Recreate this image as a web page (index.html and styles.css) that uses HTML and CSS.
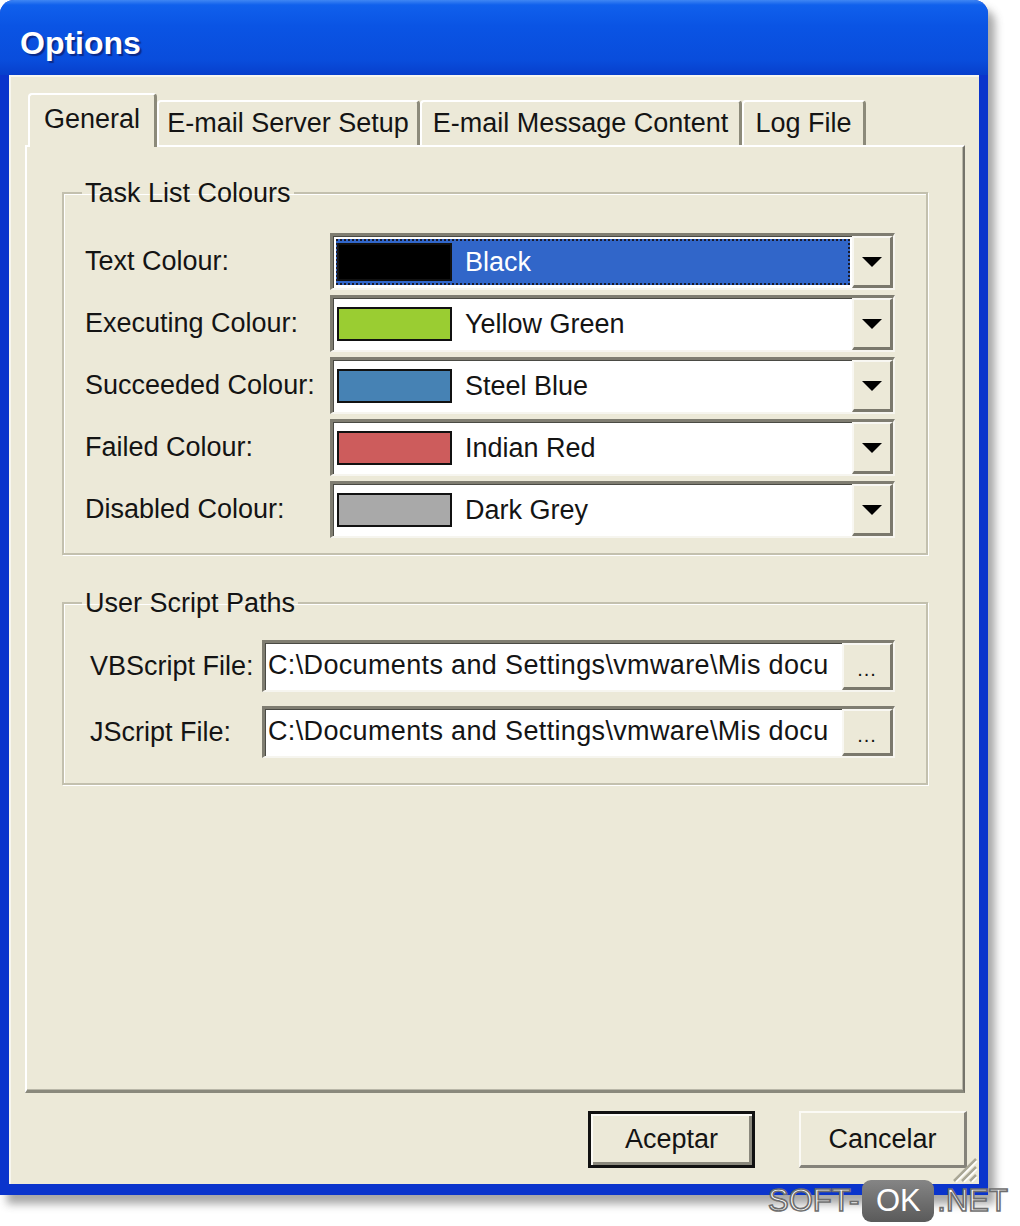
FILE: index.html
```html
<!DOCTYPE html>
<html>
<head>
<meta charset="utf-8">
<title>Options</title>
<link rel="stylesheet" href="styles.css">
</head>
<body>
<div class="window">
  <div class="titlebar"><span class="title">Options</span></div>
  <div class="client">
    <div class="tabs">
      <div class="tab active t-general">General</div>
      <div class="tab t-server">E-mail Server Setup</div>
      <div class="tab t-message">E-mail Message Content</div>
      <div class="tab t-log">Log File</div>
    </div>
    <div class="panel">
      <fieldset class="group">
        <legend>Task List Colours</legend>
        <div class="rows colours">
          <div class="row">
            <span class="label">Text Colour:</span>
            <div class="combo">
              <div class="value">
                <div class="sel focused"><span class="swatch sw-black"></span><span class="name">Black</span></div>
              </div>
              <div class="drop"><svg width="20" height="10" viewBox="0 0 20 10"><path d="M0 0H20L10 10Z" fill="#000"/></svg></div>
            </div>
          </div>
          <div class="row">
            <span class="label">Executing Colour:</span>
            <div class="combo">
              <div class="value">
                <div class="sel"><span class="swatch sw-yg"></span><span class="name">Yellow Green</span></div>
              </div>
              <div class="drop"><svg width="20" height="10" viewBox="0 0 20 10"><path d="M0 0H20L10 10Z" fill="#000"/></svg></div>
            </div>
          </div>
          <div class="row">
            <span class="label">Succeeded Colour:</span>
            <div class="combo">
              <div class="value">
                <div class="sel"><span class="swatch sw-sb"></span><span class="name">Steel Blue</span></div>
              </div>
              <div class="drop"><svg width="20" height="10" viewBox="0 0 20 10"><path d="M0 0H20L10 10Z" fill="#000"/></svg></div>
            </div>
          </div>
          <div class="row">
            <span class="label">Failed Colour:</span>
            <div class="combo">
              <div class="value">
                <div class="sel"><span class="swatch sw-ir"></span><span class="name">Indian Red</span></div>
              </div>
              <div class="drop"><svg width="20" height="10" viewBox="0 0 20 10"><path d="M0 0H20L10 10Z" fill="#000"/></svg></div>
            </div>
          </div>
          <div class="row">
            <span class="label">Disabled Colour:</span>
            <div class="combo">
              <div class="value">
                <div class="sel"><span class="swatch sw-dg"></span><span class="name">Dark Grey</span></div>
              </div>
              <div class="drop"><svg width="20" height="10" viewBox="0 0 20 10"><path d="M0 0H20L10 10Z" fill="#000"/></svg></div>
            </div>
          </div>
        </div>
      </fieldset>

      <fieldset class="group paths-group">
        <legend>User Script Paths</legend>
        <div class="rows paths">
          <div class="row prow">
            <span class="label plabel">VBScript File:</span>
            <div class="field">
              <span class="path">C:\Documents and Settings\vmware\Mis docu</span>
              <span class="browse">...</span>
            </div>
          </div>
          <div class="row prow">
            <span class="label plabel">JScript File:</span>
            <div class="field">
              <span class="path">C:\Documents and Settings\vmware\Mis docu</span>
              <span class="browse">...</span>
            </div>
          </div>
        </div>
      </fieldset>
    </div>
    <div class="buttons">
      <div class="btn default">Aceptar</div>
      <div class="btn">Cancelar</div>
    </div>
    <svg class="grip" width="30" height="30" viewBox="0 0 30 30">
      <path d="M28 6L6 28M28 14L14 28M28 22L22 28" stroke="#a9a796" stroke-width="2.5"/>
      <path d="M29 8L8 29M29 16L16 29M29 24L24 29" stroke="#ffffff" stroke-width="1.5"/>
    </svg>
  </div>
</div>
<div class="watermark">
  <span class="wm-t">SOFT-</span><span class="wm-ok">OK</span><span class="wm-t">.NET</span>
</div>
</body>
</html>
```

FILE: styles.css
```css
* { box-sizing: border-box; }
html, body { margin: 0; padding: 0; }
body {
  width: 1020px;
  height: 1226px;
  background: #ffffff;
  font-family: "Liberation Sans", Arial, sans-serif;
  color: #141414;
  overflow: hidden;
  position: relative;
}

.window {
  width: 988px;
  height: 1195px;
  display: flex;
  flex-direction: column;
  border-radius: 14px 14px 0 0;
  background: #0a34cc;
  box-shadow: 7px 9px 9px rgba(60, 60, 60, 0.45);
}

.titlebar {
  height: 75px;
  flex: none;
  border-radius: 14px 14px 0 0;
  background: linear-gradient(#3f86f3 0, #1060ec 5px, #0a54e4 35%, #094ddc 80%, #073fcc 100%);
  display: flex;
  align-items: center;
  padding-left: 20px;
  padding-top: 12px;
}
.title {
  font-weight: bold;
  font-size: 32px;
  color: #ffffff;
  text-shadow: 2px 2px 1px #0b2a8a;
}

.client {
  flex: 1;
  margin: 0 9px 11px 9px;
  background: #ece9d8;
  display: flex;
  flex-direction: column;
  padding: 18px 14px 16px 16px;
  position: relative;
  box-shadow: inset 2px 2px 0 #f7f6ef;
}

/* Tabs */
.tabs {
  display: flex;
  align-items: flex-end;
  height: 52px;
  flex: none;
  padding-left: 3px;
  position: relative;
  z-index: 1;
}
.tab {
  height: 45px;
  display: flex;
  align-items: center;
  justify-content: center;
  font-size: 27px;
  border-top: 2px solid #ffffff;
  border-left: 2px solid #ffffff;
  border-right: 3px solid #8c8a7a;
  border-radius: 4px 4px 0 0;
  background: #ece9d8;
}
.tab.active {
  height: 54px;
  margin-bottom: -2px;
  padding-bottom: 4px;
}
.t-general { width: 129px; }
.t-server { width: 263px; }
.t-message { width: 322px; }
.t-log { width: 124px; }

/* Panel */
.panel {
  flex: 1;
  border-top: 2px solid #ffffff;
  border-left: 2px solid #ffffff;
  border-right: 2px solid #74736a;
  border-bottom: 3px solid #8a897c;
  padding: 31px 35px 0 35px;
  box-shadow: inset -1px -1px 0 #b9b7a8;
}

.group {
  margin: 0;
  padding: 0;
  border: 2px solid #c3c0ae;
  box-shadow: inset 1px 1px 0 #ffffff, 1px 1px 0 #ffffff;
  min-width: 0;
}
.group legend {
  margin-left: 18px;
  padding: 0 3px;
  font-size: 27px;
  line-height: 30px;
}
.paths-group { margin-top: 33px; }

.rows {
  display: flex;
  flex-direction: column;
}
.colours {
  padding: 25px 31px 15px 21px;
  gap: 5px;
}
.paths {
  padding: 22px 31px 25px 26px;
  gap: 14px;
}

.row {
  display: flex;
  align-items: center;
  height: 57px;
}
.label {
  width: 245px;
  flex: none;
  font-size: 27px;
}
.prow { height: 52px; }
.plabel { width: 172px; }

/* Combo boxes */
.combo {
  flex: 1;
  height: 57px;
  display: flex;
  border-style: solid;
  border-width: 3px 2px 2px 3px;
  border-color: #7f7d71 #f6f5ef #f6f5ef #7f7d71;
  background: #ffffff;
  box-shadow: inset 1px 1px 0 #4a4a44;
}
.value {
  flex: 1;
  display: flex;
  padding: 3px 2px 3px 3px;
}
.sel {
  flex: 1;
  display: flex;
  align-items: center;
  font-size: 27px;
}
.sel.focused {
  background: #3166c9;
  color: #ffffff;
  outline: 2px dotted #1a1a2a;
  outline-offset: -2px;
}
.swatch {
  width: 115px;
  height: 34px;
  margin-left: 1px;
  border: 2px solid #111;
  flex: none;
}
.focused .swatch { height: 38px; }
.name { margin-left: 13px; }
.sw-black { background: #000000; }
.sw-yg { background: #9acd32; }
.sw-sb { background: #4682b4; }
.sw-ir { background: #cd5c5c; }
.sw-dg { background: #a9a9a9; }

.drop {
  width: 41px;
  flex: none;
  background: #ece9d8;
  border-style: solid;
  border-width: 2px 3px 3px 2px;
  border-color: #f8f7f2 #7a786c #7a786c #f8f7f2;
  display: flex;
  align-items: center;
  justify-content: center;
}

/* Text fields */
.field {
  flex: 1;
  height: 52px;
  display: flex;
  border-style: solid;
  border-width: 3px 2px 2px 3px;
  border-color: #7f7d71 #f6f5ef #f6f5ef #7f7d71;
  background: #ffffff;
  box-shadow: inset 1px 1px 0 #4a4a44;
}
.path {
  flex: 1;
  min-width: 0;
  white-space: nowrap;
  font-size: 27px;
  line-height: 44px;
  padding-left: 3px;
  letter-spacing: 0.35px;
}
.browse {
  width: 51px;
  flex: none;
  background: #ece9d8;
  border-style: solid;
  border-width: 2px 3px 3px 2px;
  border-color: #f8f7f2 #7a786c #7a786c #f8f7f2;
  display: flex;
  align-items: center;
  justify-content: center;
  font-size: 20px;
  padding-top: 6px;
  letter-spacing: 1px;
}

/* Buttons */
.buttons {
  flex: none;
  display: flex;
  justify-content: flex-end;
  gap: 44px;
  margin-top: 18px;
  margin-right: -2px;
}
.btn {
  width: 168px;
  height: 57px;
  display: flex;
  align-items: center;
  justify-content: center;
  font-size: 27px;
  background: #ece9d8;
  border-style: solid;
  border-width: 2px 3px 3px 2px;
  border-color: #fbfaf5 #85837a #85837a #fbfaf5;
}
.btn.default {
  width: 167px;
  border: 3px solid #111111;
  box-shadow: inset 2px 2px 0 #fbfaf5, inset -3px -3px 0 #8a887c;
}

.grip {
  position: absolute;
  right: 1px;
  bottom: 1px;
}

/* Watermark */
.watermark {
  position: absolute;
  left: 768px;
  top: 1180px;
  display: flex;
  align-items: center;
  font-size: 31px;
  line-height: 42px;
}
.wm-t {
  color: #ffffff;
  -webkit-text-stroke: 1.6px #6e6e6e;
}
.wm-ok {
  width: 72px;
  height: 42px;
  margin: 0 3px;
  display: flex;
  align-items: center;
  justify-content: center;
  color: #ffffff;
  border-radius: 9px;
  background: linear-gradient(#858585, #5a5a5a);
}
```
